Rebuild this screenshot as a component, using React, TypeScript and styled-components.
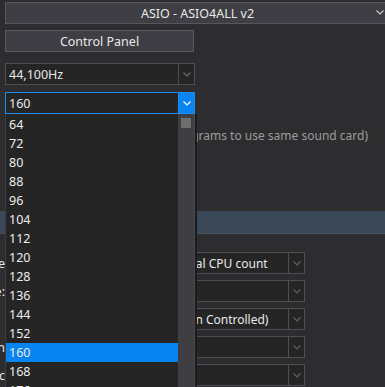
import React from "react";
import styled, { createGlobalStyle } from "styled-components";

const GlobalStyle = createGlobalStyle`
  html, body { margin: 0; padding: 0; background: #2d2d30; overflow: hidden; }
  body { font-family: "Noto Sans", "Open Sans", sans-serif; font-size: 12px; color: #e8e8e8; }
`;

const Page = styled.div`
  width: 400px;
  height: 387px;
  padding-top: 2px;
  display: flex;
  flex-direction: column;
  box-sizing: border-box;
`;

const Chevron = ({ color }: { color: string }) => (
  <svg width="8" height="5" viewBox="0 0 8 5">
    <path d="M0.5 0.5 L4 4 L7.5 0.5" fill="none" stroke={color} strokeWidth="1.2" />
  </svg>
);

const WideSelect = styled.div`
  margin-left: 5px;
  width: 385px;
  height: 22px;
  box-sizing: border-box;
  border: 1px solid #56565c;
  background: #3e3e44;
  display: flex;
  align-items: center;
  justify-content: center;
  position: relative;
  font-size: 12.5px;
`;

const WideChevron = styled.span`
  position: absolute;
  right: 5px;
  top: 7px;
  display: flex;
`;

const Button = styled.div`
  margin: 6px 0 0 5px;
  width: 189px;
  height: 22px;
  box-sizing: border-box;
  border: 1px solid #5a5a60;
  background: #3e3e44;
  display: flex;
  align-items: center;
  justify-content: center;
  font-size: 12.5px;
`;

const Select = styled.div<{ $active?: boolean; $top: number }>`
  margin: ${(p) => p.$top}px 0 0 5px;
  width: 190px;
  height: 22px;
  box-sizing: border-box;
  border: 1px solid ${(p) => (p.$active ? "#1b8cf2" : "#4f4f53")};
  background: #252526;
  display: flex;
  align-items: stretch;
  position: relative;
`;

const SelectText = styled.div`
  flex: 1;
  display: flex;
  align-items: center;
  padding-left: 3px;
  font-size: 12.5px;
`;

const SelectButton = styled.div<{ $active?: boolean }>`
  width: 15px;
  border-left: 1px solid ${(p) => (p.$active ? "#1b8cf2" : "#4f4f53")};
  background: ${(p) => (p.$active ? "#0a84f0" : "transparent")};
  display: flex;
  align-items: center;
  justify-content: center;
`;

const Note = styled.div`
  margin-top: 13px;
  width: 368px;
  display: flex;
  justify-content: flex-end;
  white-space: nowrap;
  color: #9c9c9c;
  font-size: 12px;
  line-height: 18px;
`;

const Band = styled.div`
  margin-top: 66px;
  height: 22px;
  background: #3a4756;
  border-bottom: 1px solid #46525f;
`;

const Rows = styled.div`
  margin-top: 18px;
  display: flex;
  flex-direction: column;
  gap: 6px;
`;

const Row = styled.div`
  display: grid;
  grid-template-columns: 131px 174px;
  align-items: center;
`;

const Label = styled.div`
  width: 5px;
  display: flex;
  justify-content: flex-end;
  white-space: nowrap;
  font-size: 12.5px;
`;

const RowSelect = styled.div`
  height: 22px;
  box-sizing: border-box;
  border: 1px solid #4f4f53;
  background: #252526;
  display: flex;
`;

const RowSelectText = styled.div`
  flex: 1;
  display: flex;
  align-items: center;
  padding-left: 4px;
  white-space: nowrap;
  overflow: hidden;
  font-size: 12px;
`;

const List = styled.div`
  position: absolute;
  top: 21px;
  left: -1px;
  width: 190px;
  height: 300px;
  box-sizing: border-box;
  background: #252526;
  border-left: 1px solid #3c3c40;
  border-right: 1px solid #47474c;
  box-shadow: 2px 0 0 #1c1c1e;
  display: flex;
  z-index: 10;
`;

const Items = styled.div`
  flex: 1;
  display: flex;
  flex-direction: column;
  padding-top: 1px;
`;

const Item = styled.div<{ $selected?: boolean }>`
  height: 19px;
  flex-shrink: 0;
  display: flex;
  align-items: center;
  padding-left: 3px;
  font-size: 12.5px;
  background: ${(p) => (p.$selected ? "#0784f0" : "transparent")};
  color: #ececec;
`;

const Track = styled.div`
  width: 16px;
  background: #3e3e43;
  display: flex;
  flex-direction: column;
  align-items: center;
  padding-top: 4px;
`;

const Thumb = styled.div`
  width: 10px;
  height: 10px;
  background: #6e6e6e;
`;

const values = [64, 72, 80, 88, 96, 104, 112, 120, 128, 136, 144, 152, 160, 168, 176];

const rows = [
  { label: "Multithreaded Mode", value: "Use Physical CPU count" },
  { label: "Buffer size:", value: "" },
  { label: "", value: "(Application Controlled)" },
  { label: "Mixing Resolution", value: "" },
  { label: "Stereo Logic", value: "" },
];

export default function App() {
  return (
    <>
      <GlobalStyle />
      <Page>
        <WideSelect>
          ASIO - ASIO4ALL v2
          <WideChevron>
            <Chevron color="#c8c8c8" />
          </WideChevron>
        </WideSelect>
        <Button>Control Panel</Button>
        <Select $top={11}>
          <SelectText>44,100Hz</SelectText>
          <SelectButton>
            <Chevron color="#6a6a6a" />
          </SelectButton>
        </Select>
        <Select $top={7} $active>
          <SelectText>160</SelectText>
          <SelectButton $active>
            <Chevron color="#ffffff" />
          </SelectButton>
          <List>
            <Items>
              {values.map((v) => (
                <Item key={v} $selected={v === 160}>
                  {v}
                </Item>
              ))}
            </Items>
            <Track>
              <Thumb />
            </Track>
          </List>
        </Select>
        <Note>Allow other programs to use same sound card)</Note>
        <Band />
        <Rows>
          {rows.map((r, i) => (
            <Row key={i}>
              <Label>{r.label}</Label>
              <RowSelect>
                <RowSelectText>{r.value}</RowSelectText>
                <SelectButton>
                  <Chevron color="#5e5e5e" />
                </SelectButton>
              </RowSelect>
            </Row>
          ))}
        </Rows>
      </Page>
    </>
  );
}
